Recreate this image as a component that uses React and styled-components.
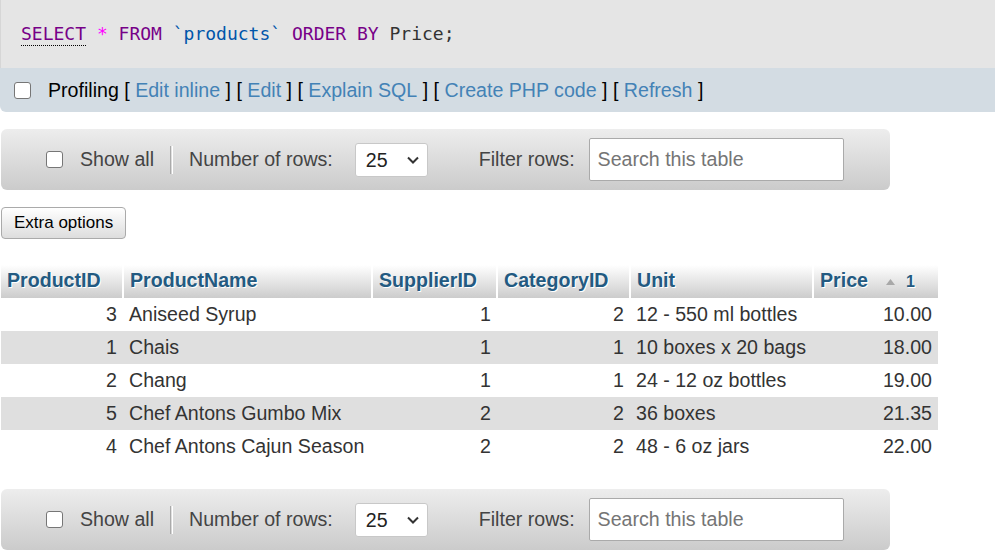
import React from 'react';
import styled, { createGlobalStyle } from 'styled-components';

const GlobalStyle = createGlobalStyle`
  body {
    margin: 0;
    background: #fff;
    font-family: "Liberation Sans", Arial, sans-serif;
    font-size: 19.6px;
    color: #333;
  }
`;

const products = [
  { id: 3, name: 'Aniseed Syrup', supplier: 1, category: 2, unit: '12 - 550 ml bottles', price: '10.00' },
  { id: 1, name: 'Chais', supplier: 1, category: 1, unit: '10 boxes x 20 bags', price: '18.00' },
  { id: 2, name: 'Chang', supplier: 1, category: 1, unit: '24 - 12 oz bottles', price: '19.00' },
  { id: 5, name: 'Chef Antons Gumbo Mix', supplier: 2, category: 2, unit: '36 boxes', price: '21.35' },
  { id: 4, name: 'Chef Antons Cajun Season', supplier: 2, category: 2, unit: '48 - 6 oz jars', price: '22.00' },
];

const columns = [
  { key: 'id', label: 'ProductID', width: 122, align: 'right' },
  { key: 'name', label: 'ProductName', width: 249, align: 'left' },
  { key: 'supplier', label: 'SupplierID', width: 125, align: 'right' },
  { key: 'category', label: 'CategoryID', width: 133, align: 'right' },
  { key: 'unit', label: 'Unit', width: 183, align: 'left' },
  { key: 'price', label: 'Price', width: 125, align: 'right', sorted: true },
];

const SqlBox = styled.div`
  background: #e5e5e5;
  height: 68px;
  display: flex;
  align-items: center;
  padding-left: 20px;
  border-left: 1px solid #d6d6d6;
`;

const Code = styled.code`
  font-family: "DejaVu Sans Mono", "Liberation Mono", monospace;
  font-size: 18px;
  color: #333;
  white-space: pre;
  margin-top: -2px;
`;

const Keyword = styled.span`
  color: #708;
  ${p => p.$dotted && `
    border-bottom: 1px dotted #000;
    padding-bottom: 1px;
  `}
`;

const Star = styled.span`
  color: #f0f;
`;

const Ident = styled.span`
  color: #05a;
`;

const ProfilingBar = styled.div`
  background: #d3dce3;
  height: 44px;
  display: flex;
  align-items: center;
  padding-left: 14px;
  border-bottom-left-radius: 6px;
  color: #000;
  margin-bottom: 17px;
  white-space: pre;
`;

const Checkbox = styled.input.attrs({ type: 'checkbox' })`
  appearance: none;
  width: 17px;
  height: 17px;
  margin: 0 17px 0 0;
  border: 1px solid #767676;
  border-radius: 3px;
  background: #fff;
  flex-shrink: 0;
`;

const Link = styled.a`
  color: #4382b6;
  text-decoration: none;
`;

const Toolbar = styled.div`
  width: 889px;
  height: 61px;
  box-sizing: border-box;
  margin-left: 1px;
  padding: 0 45px;
  display: flex;
  align-items: center;
  border-radius: 6px;
  background: linear-gradient(#ededed, #cbcbcb);
  color: #444;
  white-space: nowrap;
`;

const Separator = styled.span`
  width: 1px;
  height: 28px;
  margin: 0 16px 0 16px;
  border-left: 1px solid #aaa;
  border-right: 1px solid #fff;
  flex-shrink: 0;
`;

const Label = styled.span`
  margin-right: ${p => p.$gap || 0}px;
  flex-shrink: 0;
`;

const SelectWrap = styled.div`
  position: relative;
  width: 73px;
  height: 34px;
  margin-right: 51px;
  flex-shrink: 0;
`;

const Select = styled.select`
  appearance: none;
  width: 100%;
  height: 100%;
  box-sizing: border-box;
  border: 1px solid #c8c8c8;
  border-radius: 3px;
  background: #fff;
  padding: 0 0 0 10px;
  font: inherit;
  color: #222;
`;

const Chevron = styled.svg`
  position: absolute;
  right: 9px;
  top: 13px;
  pointer-events: none;
`;

const SearchInput = styled.input`
  width: 255px;
  height: 43px;
  box-sizing: border-box;
  border: 1px solid #aaa;
  border-radius: 2px;
  padding: 0 8px;
  font: inherit;
  color: #333;
  flex-shrink: 0;
  &::placeholder {
    color: #757575;
  }
`;

const ExtraButton = styled.button`
  display: block;
  margin: 17px 0 26px 1px;
  height: 32px;
  padding: 0 12px;
  font-family: "Liberation Sans", Arial, sans-serif;
  font-size: 17px;
  color: #000;
  border: 1px solid #aaa;
  border-radius: 4px;
  background: linear-gradient(#fff, #ddd);
`;

const Table = styled.table`
  border-collapse: collapse;
  margin: 0 0 26px 1px;
  table-layout: fixed;
`;

const Th = styled.th`
  height: 33px;
  box-sizing: border-box;
  padding: 0 6px;
  text-align: left;
  font-weight: bold;
  color: #235a81;
  text-shadow: 1px 1px 0 #fff;
  background: linear-gradient(#fff, #ccc);
  border-right: ${p => (p.$last ? 'none' : '2px solid #fff')};
  white-space: nowrap;
  line-height: 1;
  padding-bottom: 2px;
`;

const Td = styled.td`
  height: 33px;
  padding: 0 6px;
  text-align: ${p => p.$align};
  white-space: nowrap;
  color: #333;
`;

const Row = styled.tr`
  background: ${p => (p.$even ? '#dfdfdf' : '#fff')};
`;

const SortMark = styled.span`
  display: inline-flex;
  align-items: center;
  gap: 11px;
  margin-left: 18px;
  font-size: 16px;
  vertical-align: 2px;
`;

const NavBar = () => (
  <Toolbar>
    <Checkbox />
    <Label>Show all</Label>
    <Separator />
    <Label $gap={22}>Number of rows:</Label>
    <SelectWrap>
      <Select defaultValue="25">
        <option>25</option>
        <option>50</option>
        <option>100</option>
      </Select>
      <Chevron width="12" height="8" viewBox="0 0 12 8">
        <path d="M1 1.5 L6 6.5 L11 1.5" fill="none" stroke="#333" strokeWidth="2" />
      </Chevron>
    </SelectWrap>
    <Label $gap={14}>Filter rows:</Label>
    <SearchInput placeholder="Search this table" />
  </Toolbar>
);

export default function App() {
  return (
    <>
      <GlobalStyle />
      <SqlBox>
        <Code>
          <Keyword $dotted>SELECT</Keyword> <Star>*</Star> <Keyword>FROM</Keyword>{' '}
          <Ident>`products`</Ident> <Keyword>ORDER BY</Keyword> Price;
        </Code>
      </SqlBox>
      <ProfilingBar>
        <Checkbox />
        Profiling [ <Link>Edit inline</Link> ] [ <Link>Edit</Link> ] [ <Link>Explain SQL</Link> ] [{' '}
        <Link>Create PHP code</Link> ] [ <Link>Refresh</Link> ]
      </ProfilingBar>
      <NavBar />
      <ExtraButton>Extra options</ExtraButton>
      <Table>
        <colgroup>
          {columns.map(c => (
            <col key={c.key} style={{ width: c.width }} />
          ))}
        </colgroup>
        <thead>
          <tr>
            {columns.map((c, i) => (
              <Th key={c.key} $last={i === columns.length - 1}>
                {c.label}
                {c.sorted && (
                  <SortMark>
                    <svg width="9" height="6" viewBox="0 0 9 6">
                      <polygon points="4.5,0 9,6 0,6" fill="#a8a8a8" />
                    </svg>
                    1
                  </SortMark>
                )}
              </Th>
            ))}
          </tr>
        </thead>
        <tbody>
          {products.map((p, i) => (
            <Row key={p.id} $even={i % 2 === 1}>
              {columns.map(c => (
                <Td key={c.key} $align={c.align}>
                  {p[c.key]}
                </Td>
              ))}
            </Row>
          ))}
        </tbody>
      </Table>
      <NavBar />
    </>
  );
}
